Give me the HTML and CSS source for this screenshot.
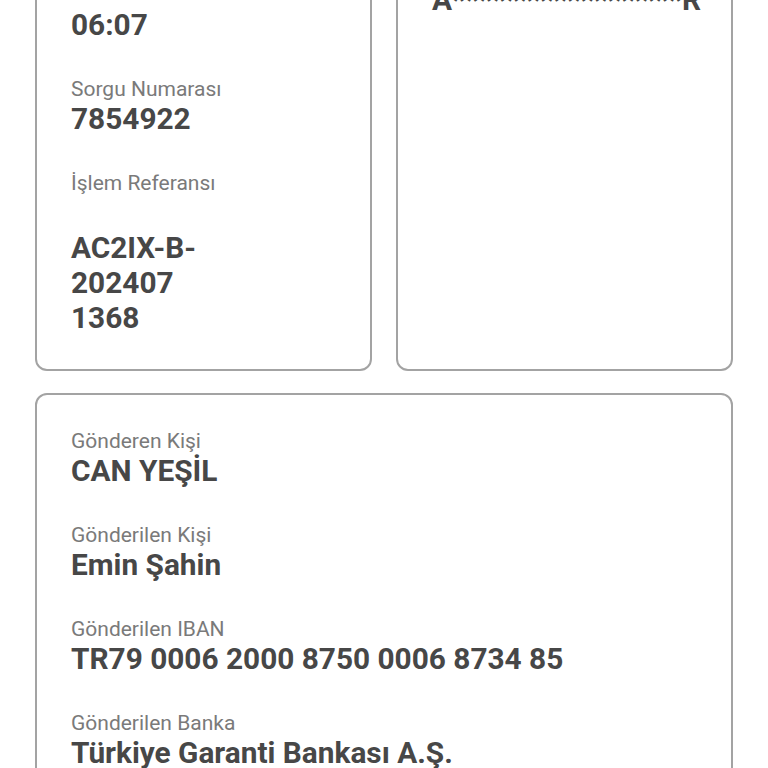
FILE: index.html
```html
<!DOCTYPE html>
<html lang="tr">
<head>
<meta charset="utf-8">
<title>İşlem Detayı</title>
<link rel="stylesheet" href="styles.css">
</head>
<body>
<main class="page">
  <div class="row">
    <section class="card">
      <div class="item">
        <div class="label">İşlem Tarihi</div>
        <div class="value">06.07.2024<br>06:07</div>
      </div>
      <div class="item">
        <div class="label">Sorgu Numarası</div>
        <div class="value">7854922</div>
      </div>
      <div class="item">
        <div class="label">İşlem Referansı</div>
        <div class="value"><br>AC2IX-B-<br>202407<br>1368</div>
      </div>
    </section>
    <section class="card card-right">
      <div class="item">
        <div class="label">Alıcı</div>
        <div class="value nowrap">A*****************R</div>
      </div>
    </section>
  </div>
  <section class="card">
    <div class="item">
      <div class="label">Gönderen Kişi</div>
      <div class="value">CAN YEŞİL</div>
    </div>
    <div class="item">
      <div class="label">Gönderilen Kişi</div>
      <div class="value">Emin Şahin</div>
    </div>
    <div class="item">
      <div class="label">Gönderilen IBAN</div>
      <div class="value">TR79 0006 2000 8750 0006 8734 85</div>
    </div>
    <div class="item">
      <div class="label">Gönderilen Banka</div>
      <div class="value">Türkiye Garanti Bankası A.Ş.</div>
    </div>
    <div class="item">
      <div class="label">Açıklama</div>
      <div class="value">Kira ödemesi</div>
    </div>
  </section>
</main>
</body>
</html>
```
FILE: styles.css
```css
html, body {
  margin: 0;
  padding: 0;
  background: #ffffff;
}
body {
  font-family: Roboto, "Liberation Sans", Arial, sans-serif;
  color: #474747;
}
.page {
  margin-top: -88px;
  padding: 0 35px 40px;
  display: flex;
  flex-direction: column;
  gap: 22px;
}
.row {
  display: grid;
  grid-template-columns: 1fr 1fr;
  gap: 24px;
  align-items: stretch;
}
.card {
  border: 2px solid #a3a3a3;
  border-radius: 12px;
  padding: 34px;
  display: flex;
  flex-direction: column;
  gap: 35px;
  min-width: 0;
}
.card-right {
  padding-top: 44px;
}
.label {
  font-size: 21px;
  line-height: 24px;
  color: #7a7a7a;
  font-weight: 400;
}
.value {
  font-size: 29.8px;
  line-height: 35px;
  font-weight: 700;
  color: #474747;
}
.nowrap {
  white-space: nowrap;
}
```
